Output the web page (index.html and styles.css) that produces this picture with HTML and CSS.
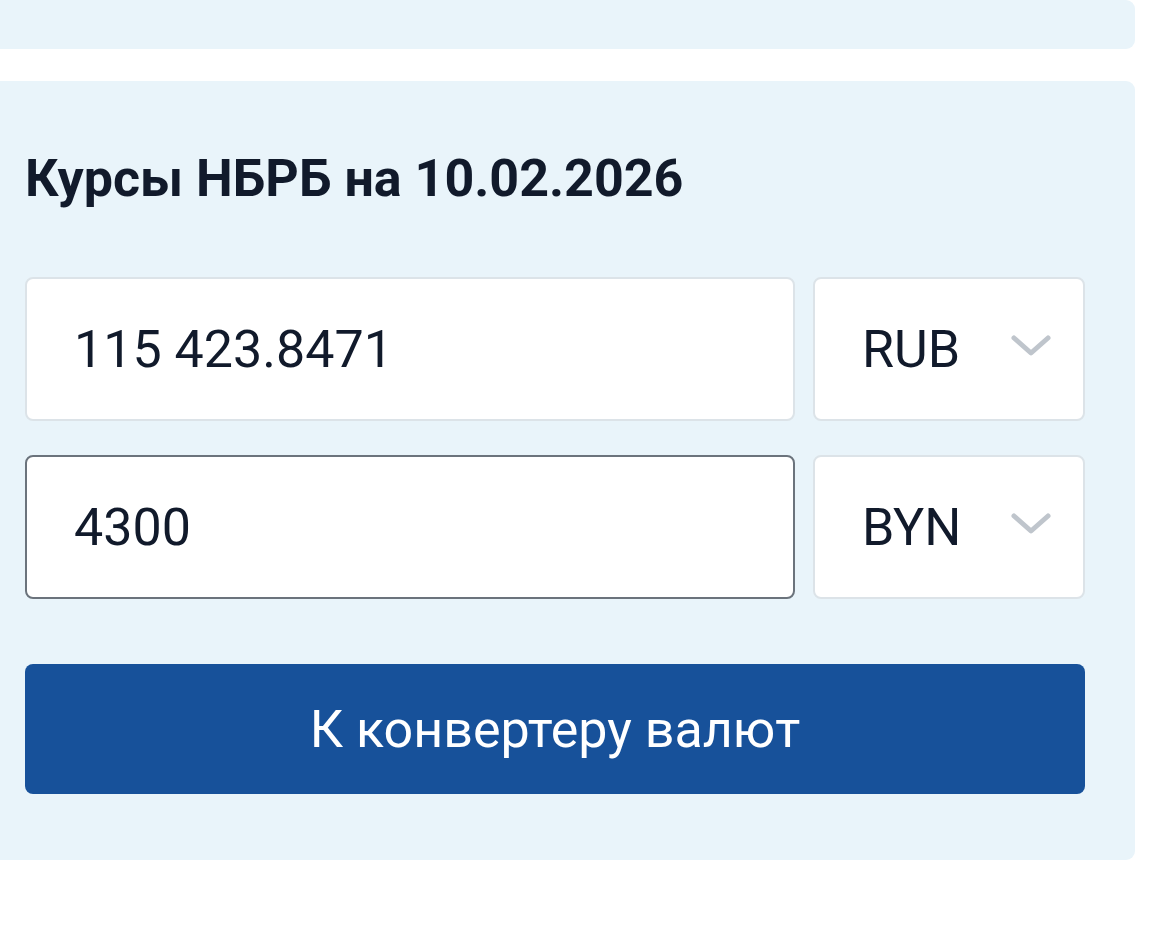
FILE: index.html
```html
<!DOCTYPE html>
<html lang="ru">
<head>
<meta charset="utf-8">
<title>Курсы НБРБ</title>
<link rel="stylesheet" href="styles.css">
</head>
<body>
<div class="panel panel-top"></div>
<section class="panel panel-rates">
  <h2 class="rates-title">Курсы НБРБ на 10.02.2026</h2>
  <div class="conv-row">
    <input class="amount" type="text" value="115 423.8471">
    <div class="select">
      <span class="select-value">RUB</span>
      <svg class="chevron" width="40" height="22" viewBox="0 0 40 22"><path d="M3 3 L20 18 L37 3" fill="none" stroke="#bfc5cc" stroke-width="5" stroke-linecap="round" stroke-linejoin="round"/></svg>
    </div>
  </div>
  <div class="conv-row">
    <input class="amount amount-focus" type="text" value="4300">
    <div class="select">
      <span class="select-value">BYN</span>
      <svg class="chevron" width="40" height="22" viewBox="0 0 40 22"><path d="M3 3 L20 18 L37 3" fill="none" stroke="#bfc5cc" stroke-width="5" stroke-linecap="round" stroke-linejoin="round"/></svg>
    </div>
  </div>
  <button class="btn-primary" type="button">К конвертеру валют</button>
</section>
</body>
</html>
```
FILE: styles.css
```css
* { box-sizing: border-box; }
html, body { margin: 0; padding: 0; background: #ffffff; }
body {
  font-family: Roboto, "Noto Sans", "Liberation Sans", sans-serif;
  color: #111a2b;
  width: 1166px;
}
.panel {
  background: #e9f4fa;
  width: 1135px;
  border-radius: 0 9px 9px 0;
}
.panel-top {
  height: 49px;
}
.panel-rates {
  margin-top: 32px;
  padding: 67px 50px 66px 25px;
}
.rates-title {
  margin: 0;
  font-size: 52px;
  line-height: 62px;
  font-weight: 700;
  color: #111a2b;
}
.conv-row {
  display: flex;
  gap: 18px;
  margin-top: 34px;
}
.rates-title + .conv-row { margin-top: 67px; }
.amount {
  flex: 1 1 auto;
  min-width: 0;
  height: 144px;
  border: 2.5px solid #dce3e8;
  border-radius: 8px;
  background: #ffffff;
  padding: 0 20px 0 47px;
  font-family: Roboto, "Noto Sans", "Liberation Sans", sans-serif;
  font-size: 52px;
  color: #111a2b;
  outline: none;
}
.amount-focus {
  border-color: #6b737c;
}
.select {
  flex: 0 0 272px;
  height: 144px;
  border: 2.5px solid #dce3e8;
  border-radius: 8px;
  background: #ffffff;
  display: flex;
  align-items: center;
  justify-content: space-between;
  padding: 0 32px 0 47px;
}
.select-value {
  font-size: 52px;
  color: #111a2b;
}
.chevron { display: block; margin-top: -6px; }
.btn-primary {
  display: block;
  width: 100%;
  margin-top: 65px;
  height: 130px;
  border: 0;
  border-radius: 8px;
  background: #17519a;
  color: #ffffff;
  font-family: Roboto, "Noto Sans", "Liberation Sans", sans-serif;
  font-size: 52px;
  font-weight: 400;
  cursor: pointer;
}
```
